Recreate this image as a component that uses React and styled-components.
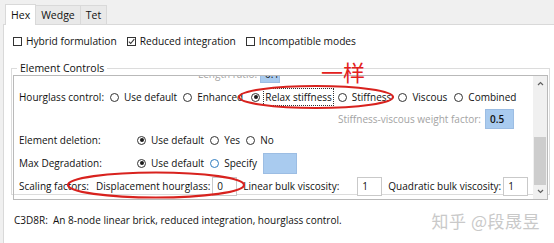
import React from 'react'
import styled, { createGlobalStyle } from 'styled-components'

const GlobalStyle = createGlobalStyle`
  html, body {
    margin: 0;
    padding: 0;
    background: #ffffff;
  }
  body {
    font-family: "Open Sans", "Noto Sans", sans-serif;
    font-size: 10px;
    color: #111111;
  }
`

const Screen = styled.div`
  position: relative;
  width: 554px;
  height: 243px;
  overflow: hidden;
  background: #f0f0f0;
  display: flex;
  flex-direction: column;
`

const TabBar = styled.div`
  height: 24px;
  display: flex;
  align-items: flex-end;
  padding-left: 5px;
  flex-shrink: 0;
`

const Tab = styled.div`
  height: ${p => (p.active ? '20px' : '18px')};
  padding: 0 5px;
  display: flex;
  align-items: center;
  background: ${p => (p.active ? '#ffffff' : '#e9e9e9')};
  border: 1px solid #d9d9d9;
  border-bottom: none;
  margin-right: -1px;
  position: relative;
  z-index: ${p => (p.active ? 1 : 0)};
  margin-bottom: ${p => (p.active ? '-1px' : '0')};
  font-size: 10.5px;
  line-height: 1;
`

const Panel = styled.div`
  flex: 1;
  margin-left: 3px;
  background: #ffffff;
  border-left: 1px solid #d9d9d9;
  border-top: 1px solid #d9d9d9;
  display: flex;
  flex-direction: column;
`

const CheckRow = styled.div`
  height: 32px;
  display: flex;
  align-items: center;
  padding-left: 9px;
  gap: 10px;
  font-size: 10.2px;
`

const Option = styled.label`
  display: flex;
  align-items: center;
  gap: ${p => p.gap || 5}px;
  white-space: nowrap;
`

const Box = styled.span`
  width: 9px;
  height: 9px;
  box-sizing: border-box;
  border: 1px solid #333333;
  background: #ffffff;
  display: inline-flex;
  align-items: center;
  justify-content: center;
  flex-shrink: 0;
`

const Radio = styled.span`
  width: 9px;
  height: 9px;
  box-sizing: border-box;
  border-radius: 50%;
  border: 1px solid ${p => (p.hover ? '#2f7cc0' : '#333333')};
  background: #ffffff;
  display: inline-flex;
  align-items: center;
  justify-content: center;
  flex-shrink: 0;
  &::after {
    content: '';
    width: 4px;
    height: 4px;
    border-radius: 50%;
    background: ${p => (p.checked ? '#1b1b1b' : 'transparent')};
  }
`

const Focus = styled.span`
  outline: 1px dotted #333333;
  outline-offset: 1px;
`

const Group = styled.fieldset`
  margin: 4px 4px 0 7px;
  padding: 0 1px 2px 1px;
  border: 1px solid #dcdcdc;
  height: 134px;
  box-sizing: border-box;
  min-width: 0;
`

const Legend = styled.legend`
  padding: 0 3px;
  margin-left: 4px;
  line-height: 14px;
  font-size: 10.5px;
`

const Pane = styled.div`
  height: 123px;
  border: 1px solid #b9b9b9;
  display: flex;
  overflow: hidden;
`

const PaneBody = styled.div`
  flex: 1;
  min-width: 0;
  display: flex;
  flex-direction: column;
  padding-left: 5px;
`

const Row = styled.div`
  height: ${p => p.h}px;
  flex-shrink: 0;
  display: flex;
  align-items: center;
  justify-content: ${p => p.justify || 'flex-start'};
  padding-right: ${p => p.pr || 0}px;
  margin-top: ${p => p.mt || 0}px;
  gap: ${p => (p.gap !== undefined ? p.gap : 6)}px;
  white-space: nowrap;
`

const Label = styled.span`
  width: ${p => (p.w ? `${p.w}px` : 'auto')};
  flex-shrink: 0;
  color: ${p => (p.muted ? '#a3a3a3' : '#111111')};
  margin-left: ${p => p.ml || 0}px;
`

const Field = styled.span`
  width: ${p => p.w}px;
  height: ${p => p.hgt || 19}px;
  box-sizing: border-box;
  flex-shrink: 0;
  display: inline-flex;
  align-items: center;
  padding-left: 4px;
  margin-left: ${p => p.ml || 0}px;
  background: ${p => (p.blue ? '#a9cbef' : '#ffffff')};
  border: 1px solid ${p => (p.blue ? '#9cbde3' : '#c9c9c9')};
  font-weight: ${p => (p.bold ? 600 : 400)};
`

const Clip = styled.div`
  height: 8px;
  flex-shrink: 0;
  overflow: hidden;
  display: flex;
  align-items: flex-end;
`

const Scrollbar = styled.div`
  width: 14px;
  background: #f0f0f0;
  display: flex;
  flex-direction: column;
  align-items: center;
  flex-shrink: 0;
`

const Arrow = styled.div`
  height: 16px;
  display: flex;
  align-items: center;
  justify-content: center;
`

const Track = styled.div`
  flex: 1;
  width: 100%;
  display: flex;
  flex-direction: column;
  padding-top: 46px;
`

const Thumb = styled.div`
  height: 48px;
  margin: 0 1px;
  background: #cdcdcd;
`

const Footer = styled.div`
  flex: 1;
  display: flex;
  align-items: center;
  justify-content: space-between;
  padding: 2px 14px 0 10px;
`

const Watermark = styled.span`
  font-family: "Noto Sans CJK SC", sans-serif;
  font-size: 17px;
  color: #c9c9c9;
  letter-spacing: 0.5px;
`

const Note = styled.div`
  position: absolute;
  left: 321px;
  top: 58px;
  font-family: "Noto Sans CJK SC", sans-serif;
  font-size: 22px;
  line-height: 26px;
  color: #e3211d;
`

const Marks = styled.svg`
  position: absolute;
  left: 0;
  top: 0;
  pointer-events: none;
`

const Check = () => (
  <svg width="7" height="7" viewBox="0 0 7 7">
    <path d="M0.8 3.6 L2.7 5.5 L6.3 1.2" fill="none" stroke="#333" strokeWidth="1.1" />
  </svg>
)

const Chevron = ({ down }) => (
  <svg width="7" height="5" viewBox="0 0 7 5">
    <path d={down ? 'M1 1 L3.5 3.5 L6 1' : 'M1 4 L3.5 1.5 L6 4'} fill="none" stroke="#606060" strokeWidth="1.2" />
  </svg>
)

const App = () => (
  <Screen>
    <GlobalStyle />
    <TabBar>
      <Tab active>Hex</Tab>
      <Tab>Wedge</Tab>
      <Tab>Tet</Tab>
    </TabBar>
    <Panel>
      <CheckRow>
        <Option gap={4}><Box /> Hybrid formulation</Option>
        <Option gap={4}><Box><Check /></Box> Reduced integration</Option>
        <Option gap={4}><Box /> Incompatible modes</Option>
      </CheckRow>
      <Group>
        <Legend>Element Controls</Legend>
        <Pane>
          <PaneBody>
            <Clip>
              <Row h={20} gap={3}>
                <Label muted ml={179}>Length ratio:</Label>
                <Field blue w={20} hgt={18}>0.1</Field>
              </Row>
            </Clip>
            <Row h={22} mt={2} gap={6}>
              <Label>Hourglass control:</Label>
              <Option><Radio /> Use default</Option>
              <Option><Radio /> Enhanced</Option>
              <Option style={{ marginLeft: 2 }}><Radio checked /> <Focus>Relax stiffness</Focus></Option>
              <Option><Radio /> Stiffness</Option>
              <Option style={{ marginLeft: 1 }}><Radio /> Viscous</Option>
              <Option style={{ marginLeft: 1 }}><Radio /> Combined</Option>
            </Row>
            <Row h={21} justify="flex-end" pr={19} gap={4}>
              <Label muted>Stiffness-viscous weight factor:</Label>
              <Field blue bold w={29} hgt={20}>0.5</Field>
            </Row>
            <Row h={22}>
              <Label w={112}>Element deletion:</Label>
              <Option><Radio checked /> Use default</Option>
              <Option><Radio /> Yes</Option>
              <Option><Radio /> No</Option>
            </Row>
            <Row h={22} mt={1}>
              <Label w={112}>Max Degradation:</Label>
              <Option><Radio checked /> Use default</Option>
              <Option><Radio hover /> Specify</Option>
              <Field blue w={34} hgt={21} />
            </Row>
            <Row h={22} mt={1}>
              <Label w={71}>Scaling factors:</Label>
              <Label>Displacement hourglass:</Label>
              <Field w={25} ml={-4}>0</Field>
              <Label>Linear bulk viscosity:</Label>
              <Field w={25} ml={12}>1</Field>
              <Label>Quadratic bulk viscosity:</Label>
              <Field w={25} ml={-4}>1</Field>
            </Row>
          </PaneBody>
          <Scrollbar>
            <Arrow><Chevron /></Arrow>
            <Track><Thumb /></Track>
            <Arrow><Chevron down /></Arrow>
          </Scrollbar>
        </Pane>
      </Group>
      <Footer>
        <span>C3D8R:&nbsp; An 8-node linear brick, reduced integration, hourglass control.</span>
        <Watermark>知乎 @段晟昱</Watermark>
      </Footer>
    </Panel>
    <Note>一样</Note>
    <Marks width="554" height="243" viewBox="0 0 554 243">
      <ellipse cx="316" cy="97" rx="77" ry="11" fill="none" stroke="#d8221e" strokeWidth="2.2" />
      <ellipse cx="156" cy="185" rx="88" ry="12.5" fill="none" stroke="#d8221e" strokeWidth="2.2" />
    </Marks>
  </Screen>
)

export default App
